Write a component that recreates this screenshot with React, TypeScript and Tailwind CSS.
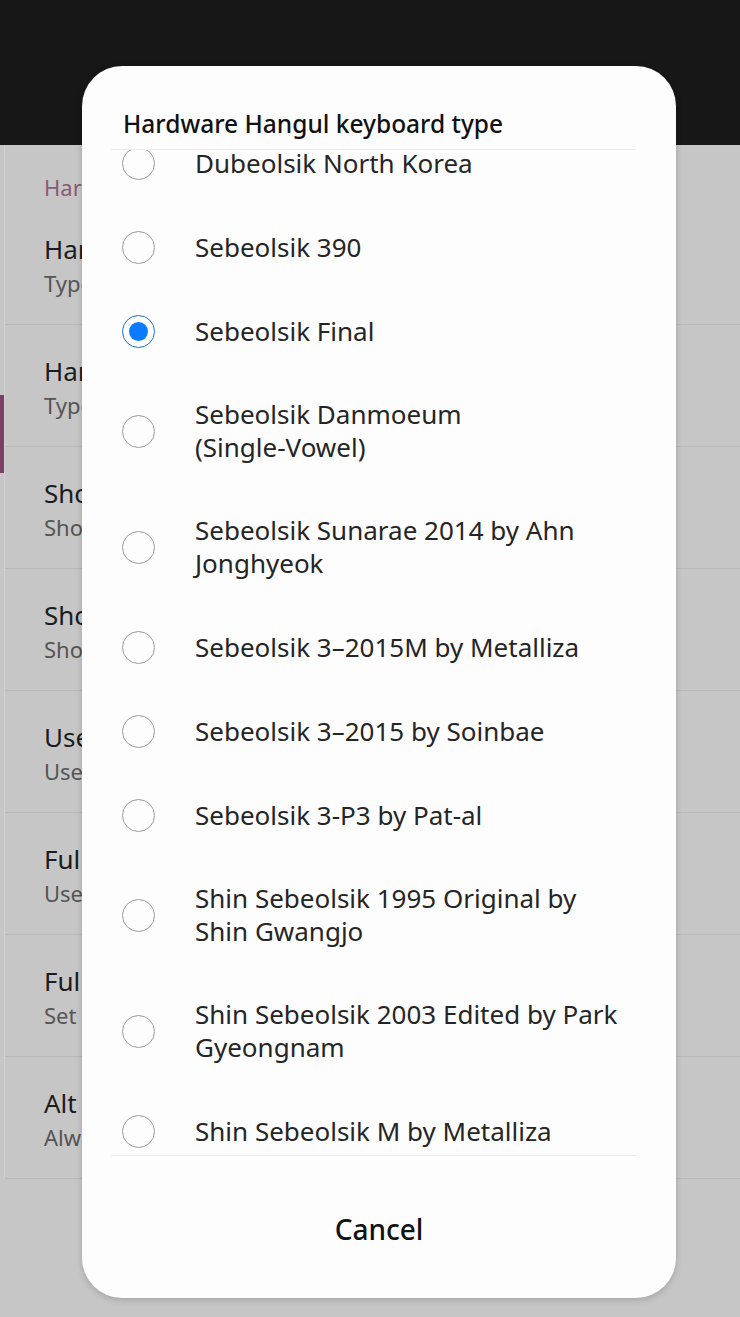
import React from 'react';

const font = { fontFamily: '"Noto Sans", Roboto, sans-serif' };

const settings = [
  { title: 'Hardware keyboard', sub: 'Type on a keyboard' },
  { title: 'Hangul layout', sub: 'Type in Hangul' },
  { title: 'Show keyboard', sub: 'Show on screen' },
  { title: 'Shortcuts', sub: 'Show list' },
  { title: 'Use shortcuts', sub: 'Use key combos' },
  { title: 'Full stop', sub: 'Use double space' },
  { title: 'Full width', sub: 'Set character' },
  { title: 'Alt key', sub: 'Always on' },
];

// second part (if any) is kept together on one line
const options: [string, string?][] = [
  ['Dubeolsik North Korea'],
  ['Sebeolsik 390'],
  ['Sebeolsik Final'],
  ['Sebeolsik Danmoeum', '(Single-Vowel)'],
  ['Sebeolsik Sunarae 2014 by Ahn Jonghyeok'],
  ['Sebeolsik 3\u20132015M by Metalliza'],
  ['Sebeolsik 3\u20132015 by Soinbae'],
  ['Sebeolsik 3-P3 by Pat-al'],
  ['Shin Sebeolsik 1995 Original by Shin Gwangjo'],
  ['Shin Sebeolsik 2003 Edited by Park Gyeongnam'],
  ['Shin Sebeolsik M by Metalliza'],
];

const Radio: React.FC<{ checked: boolean }> = ({ checked }) =>
  checked ? (
    <div className="w-[33px] h-[33px] rounded-full border-[1.5px] border-[#1b6fd8] flex items-center justify-center shrink-0">
      <div className="w-[19px] h-[19px] rounded-full bg-[#0a7bff]" />
    </div>
  ) : (
    <div className="w-[33px] h-[33px] rounded-full border-[1.5px] border-[#9a9a9a] shrink-0" />
  );

export default function App() {
  const selected = 'Sebeolsik Final';

  return (
    <div className="relative w-[740px] h-[1317px] overflow-hidden bg-[#c6c6c6]" style={font}>
      <div className="h-[145px] bg-[#171717]" />

      <div className="flex">
        <div className="w-[4px] flex flex-col shrink-0">
          <div className="h-[250px]" />
          <div className="h-[78px] bg-[#7b3f63]" />
        </div>
        <div className="flex-1 border-l border-[#d0d0d0]">
          <div className="h-[58px] pl-[39px] pt-[26px] text-[22px] leading-[32px] text-[#8a5a70]">
            Hardware keyboard
          </div>
          {settings.map((s) => (
            <div key={s.title} className="h-[122px] border-b border-[#b9b9b9] pl-[39px] pt-[28px]">
              <div className="text-[26px] leading-[36px] text-[#1c1c1c]">{s.title}</div>
              <div className="text-[22px] leading-[32px] text-[#555555]">{s.sub}</div>
            </div>
          ))}
        </div>
      </div>

      <div className="absolute left-[82px] top-[66px] w-[594px] h-[1232px] rounded-[40px] bg-[#fdfdfd] shadow-[0_2px_6px_rgba(0,0,0,0.18)] flex flex-col">
        <div className="pt-[42px] pb-[9px] px-[41px] text-[24.5px] leading-[32px] font-medium text-[#111111]">
          Hardware Hangul keyboard type
        </div>
        <div className="ml-[29px] mr-[40px] h-px bg-[#ececec]" />
        <div className="ml-[29px] mr-[40px] h-[1005px] overflow-hidden">
          <div className="mt-[-29px]">
            {options.map(([label, tail]) => (
              <div key={label} className="flex items-center min-h-[84px] py-[25px] pr-[8px]">
                <div className="w-[84px] pl-[11px] shrink-0">
                  <Radio checked={label === selected} />
                </div>
                <div className="text-[26px] leading-[33px] text-[#252525]">
                  {label}
                  {tail && (
                    <>
                      {' '}
                      <span className="whitespace-nowrap">{tail}</span>
                    </>
                  )}
                </div>
              </div>
            ))}
          </div>
        </div>
        <div className="ml-[29px] mr-[40px] h-px bg-[#ececec]" />
        <div className="flex-1 flex items-center justify-center pt-[4px]">
          <span className="text-[28px] font-medium text-[#111111]">Cancel</span>
        </div>
      </div>
    </div>
  );
}
